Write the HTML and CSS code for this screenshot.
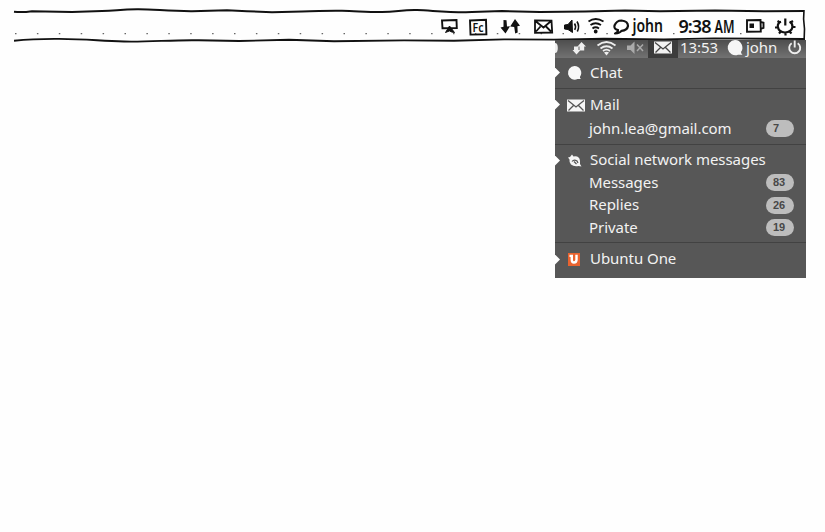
FILE: index.html
```html
<!DOCTYPE html>
<html lang="en">
<head>
<meta charset="utf-8">
<title>Messaging menu</title>
<link rel="stylesheet" href="styles.css">
</head>
<body>
<header class="sketch">
  <svg class="frame" width="825" height="48" viewBox="0 0 825 48" fill="none" stroke="#111">
    <path stroke-width="2" d="M14 11.700q8 1 18-.5l40 .7 30-.8c15-.5 18-1.600 35-1.800s30 2 55 1.900l35-1 20 1 25 1 30-.7c20-.4 25-1 40-.7s25 1.400 40 1.300 20-2.400 35-2 30 2.500 55 2l30-1 38 1 45-.5 40-1 35 .6 55-.6 50 .6 39-.3"/>
    <path stroke-width="1.900" d="M14 40.700q20-2 45-1.800c30 .3 40 2 65 2.600s50-1.800 75-1.200l40 .7 50-1.200 45 1.500 70-.9 50 .3 50-1.300 50 .2 50-.9 60 .7 50-1 91 .6"/>
    <path stroke-width="1.600" d="M804 10l-.4 9 .9 10-.3 9"/>
    <path stroke="#666" stroke-width="1.300" stroke-dasharray="1.500 20.400" d="M15 33.700H616M673 33.700h2M740 33.700h2"/>
  </svg>
  <div class="indicators">
    <svg width="17" height="28" viewBox="441 10 17 28" fill="none" stroke="#111" stroke-width="1.900"><path d="M442 20.500l14.500-.4.300 8-14.300.2z"/><path fill="#111" stroke-width="1" d="M449.500 26l5 6.500-3-.6-2-1-4 1.600z"/></svg>
    <svg width="19" height="28" viewBox="469 10 19 28"><path fill="none" stroke="#111" stroke-width="1.900" d="M470 20.500l16-.8.400 14.600-15.900.3z"/><text class="hand" x="472.500" y="31.500" font-size="12" textLength="11" lengthAdjust="spacingAndGlyphs">Fc</text></svg>
    <svg width="21" height="28" viewBox="500 10 21 28" fill="#111"><path d="M503.500 20l3 .2.500 6.300 3-.3-4.500 7.300-5-6 3-.7zM515 19l5 6.800-2.600.4.300 6.300-2.500 1-1-6.500-4-.5z"/></svg>
    <svg width="20" height="28" viewBox="534 10 20 28" fill="none" stroke="#111" stroke-width="1.800"><path d="M535 20.500l16.500.2.700 11.800-17.200.3zM536 21.500l7.500 6 7-6M536 31.500l4.500-5M551 31.500l-5-5"/></svg>
    <svg width="18" height="28" viewBox="563 10 18 28" fill="none" stroke="#111" stroke-width="1.600"><path fill="#111" stroke-width="1" d="M564.500 25l3.500-.5 4-4.500.5 12.500-4.500-3-3.500-.5z"/><path d="M574.500 23.500q2 3 .2 6.300M577 21.500q3 5 .3 10"/></svg>
    <svg width="18" height="28" viewBox="588 10 18 28" fill="none" stroke="#111" stroke-width="1.800"><path d="M588.500 21.500q7-5 15 0M590.500 25q5-3.500 10.500 0M592.500 28.500q3-2.500 6.500 0"/><circle cx="595.700" cy="31.500" r="1" fill="#111"/></svg>
    <svg width="18" height="28" viewBox="613 10 18 28" fill="none" stroke="#111" stroke-width="2.200" stroke-linejoin="round"><path d="M618 30q-4.500-1-3.500-4.500 2-5 7-5 6.500.5 6.500 5.500-.8 4.500-6.500 4.800-1.500 2.500-6.500 2.700 3-.8 3-3.500z"/></svg>
    <svg width="34" height="28" viewBox="632 10 34 28"><text class="hand" x="632.500" y="32" font-size="18" textLength="30.500" lengthAdjust="spacingAndGlyphs">john</text></svg>
    <svg width="60" height="28" viewBox="678 10 60 28"><text class="hand" x="678.500" y="32.500" font-size="18" textLength="33" lengthAdjust="spacing">9:38</text><text class="hand" x="714.500" y="32.500" font-size="18" textLength="20" lengthAdjust="spacingAndGlyphs">AM</text></svg>
    <svg width="20" height="28" viewBox="746 10 20 28" fill="none" stroke="#111" stroke-width="1.900"><path d="M747 20.300l13.500-.3.300 11.500-13.800.2zM761 22l2.500.8v5l-2.500 1"/><path fill="#111" stroke="none" d="M749.500 23.500h4.500v4.500h-4.500z"/></svg>
    <svg width="24" height="28" viewBox="775 10 24 28" fill="none" stroke="#111" stroke-width="2.200"><path d="M781 21.800q-3.500 1.200-3.200 5 1 5.500 7.200 5.700 6.500-.3 7.500-5.500 0-4-3-5.200M785.300 18.500v7M775 27.500h3M777.500 21l2.500 1.500M792 27h3.500M793 21l-2.500 1.500M779 33.500l1.800-2M785.500 32v3.500M791.500 33.500l-2-2"/></svg>
  </div>
</header>
<main class="panel">
  <div class="bar">
    <svg width="31" height="18" viewBox="555 40 31 18" fill="#eee"><path d="M555 43q2.800 0 2.800 5t-2.800 5zM574 46.500h4.500V50h2l-4 4.500-4-4.500h1.500zM581.500 42l4.500 4.500h-1.800v4h-4.700v-4h-2z"/></svg>
    <svg width="19" height="18" viewBox="597 40 19 18" fill="none" stroke="#eee" stroke-width="1.800"><path d="M597.500 45.500q9-7 18 0M600.500 48.500q6-4.500 12 0M603 51q3.500-2.600 7 0"/><path fill="#eee" stroke="none" d="M604 52.500q2.500-1.500 5 0l-2.500 3z"/></svg>
    <svg width="18" height="18" viewBox="626 40 18 18"><path fill="#aaa" d="M627 45.500h3.500l4-4v12.500l-4-4H627z"/><path stroke="#aaa" stroke-width="1.500" d="M637 44.500l6 6.500M643 44.500l-6 6.500"/></svg>
    <div class="active"><svg width="18" height="13" viewBox="0 0 18 13"><path fill="#f2f2f2" d="M0 .5h18v12H0z"/><path fill="none" stroke="#444" stroke-width="1.300" d="M1 1.500l8 6.500 8-6.500M1.500 11.500l5-5M16.500 11.500l-5-5"/></svg></div>
    <span class="clock">13:53</span>
    <svg width="17" height="18" viewBox="727 40 17 18"><path fill="#f6f6f6" d="M735 40a7.600 7.600 0 1 0 3 14.700h4.500q-1.500-1-1.500-2.700A7.600 7.600 0 0 0 735 40z"/></svg>
    <span class="user">john</span>
    <svg width="14" height="18" viewBox="788 40 14 18" fill="none" stroke="#eee" stroke-width="1.900"><path d="M791.700 43.200a5.500 5.500 0 1 0 6 0M794.700 40.500v7"/></svg>
  </div>
  <section class="group chat">
    <div class="row head"><i class="arrow"></i><svg class="icon" width="18" height="16" viewBox="0 0 18 16"><path fill="#f8f8f8" d="M7.500 1a6.800 6.800 0 1 0 3 13H14q-1.500-1-1-2.300A6.800 6.800 0 0 0 7.500 1z"/></svg><span>Chat</span></div>
  </section>
  <section class="group mail">
    <div class="row head"><i class="arrow"></i><svg class="icon" width="18" height="16" viewBox="0 0 18 16"><path fill="#f5f5f5" d="M0 2.500h18v12H0z"/><path fill="none" stroke="#555" stroke-width="1.300" d="M1 3.500L9 10l8-6.500M1.500 13.500l5-5M16.500 13.500l-5-5"/></svg><span>Mail</span></div>
    <div class="row sub"><span>john.lea@gmail.com</span><b class="count">7</b></div>
  </section>
  <section class="group social">
    <div class="row head"><i class="arrow"></i><svg class="icon" width="18" height="16" viewBox="0 0 18 16"><path fill="#f5f5f5" d="M1 4.500l2-.5 2-2.500L6.500 3.500q6-1 6.500 4.500v3l1.500 2.500-3-.5Q7 14 4 11.500 2 9.500 2.500 6.500z"/><path fill="none" stroke="#555" stroke-width="1.200" d="M5 8.500q2-2.500 5-.5l1 2M7 8.500l2.500 2.500"/></svg><span>Social network messages</span></div>
    <div class="row sub"><span>Messages</span><b class="count">83</b></div>
    <div class="row sub"><span>Replies</span><b class="count">26</b></div>
    <div class="row sub"><span>Private</span><b class="count">19</b></div>
  </section>
  <section class="group one">
    <div class="row head"><i class="arrow"></i><svg class="icon" width="18" height="16" viewBox="0 0 18 16"><path fill="#e9632f" d="M1 1h12v13H1z"/><path fill="none" stroke="#fff" stroke-width="2.400" d="M2.500 3.900h2.300V8q0 2.500 2.200 2.500T9.500 8V2.700"/></svg><span>Ubuntu One</span></div>
  </section>
</main>
</body>
</html>
```
FILE: styles.css
```css
* { box-sizing: border-box; }
body { margin: 0; width: 825px; height: 532px; background: #fefefe; font-family: "Noto Sans", "Open Sans", sans-serif; overflow: hidden; }
svg { display: block; flex: none; overflow: visible; }

.sketch { position: relative; height: 40px; }
.frame { position: absolute; left: 0; top: 0; }
.indicators {
  position: relative;
  display: grid;
  grid-template-columns: 28px 31px 34px 29px 25px 25px 19px 46px 68px 29px 1fr;
  padding: 10px 0 0 441px;
}
.hand { font-family: "Noto Sans", sans-serif; font-weight: 600; fill: #111; }

.panel { position: relative; width: 251px; height: 238px; margin-left: 555px; background: #575757; color: #f2f2f2; font-size: 15px; letter-spacing: -0.05px; }
.bar {
  display: grid;
  grid-template-columns: 42px 29px 22px 32px 47px 19px 42px 1fr;
  height: 18px;
  background: linear-gradient(#4e4e4e, #727272);
  line-height: 15px;
  white-space: nowrap;
}
.active { display: flex; width: 30px; height: 18px; justify-content: center; padding-top: 1px; background: #3c3c3c; }
.group { border-bottom: 1px solid #424242; }
.chat { height: 31px; padding-top: 4px; }
.mail { height: 56px; padding-top: 5px; }
.social { height: 98px; padding-top: 4px; }
.one { height: 35px; padding-top: 5px; border: 0; }
.row { display: flex; align-items: center; height: 23px; padding-right: 12px; white-space: nowrap; }
.row span { padding-bottom: 3px; }
.mail .sub { height: 24px; }
.social .sub { height: 22.500px; }
.arrow { width: 5px; height: 10px; margin-right: 7px; background: #fff; clip-path: polygon(0 0, 100% 50%, 0 100%); }
.chat .arrow, .mail .arrow, .chat .icon, .mail .icon { margin-top: -2px; }
.icon { margin-right: 5px; }
.sub { padding-left: 34px; justify-content: space-between; }
.count { width: 28px; height: 17px; padding-left: 7px; margin-top: -1px; border-radius: 9px; background: #bdbdbd; color: #484848; font: bold 11px/17px "Liberation Sans", sans-serif; }
```
